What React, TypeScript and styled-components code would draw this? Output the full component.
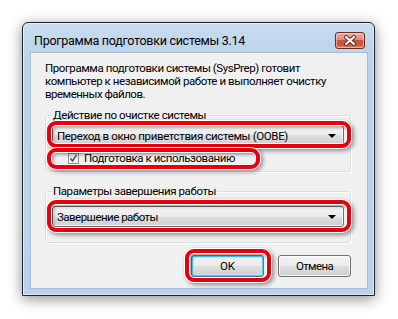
import React, { useLayoutEffect, useRef, useState } from 'react';
import styled, { createGlobalStyle } from 'styled-components';

const Global = createGlobalStyle`
  html, body { margin: 0; padding: 0; background: #ffffff; }
  body { font-family: Roboto, "Noto Sans", sans-serif; color: #000; }
  * { box-sizing: border-box; }
`;

const FitSpan = styled.span`
  display: inline-block;
  white-space: nowrap;
`;

/* Fits a label to the width it has in the screenshot (Segoe UI metrics) */
function Fit({ w, children }: { w: number; children: string }) {
  const ref = useRef<HTMLSpanElement>(null);
  const [ls, setLs] = useState(0);
  useLayoutEffect(() => {
    const el = ref.current;
    if (!el) return;
    el.style.letterSpacing = '0px';
    const natural = el.getBoundingClientRect().width;
    const n = (el.textContent || '').length;
    setLs((w - natural) / n);
  }, [w, children]);
  return (
    <FitSpan ref={ref} style={{ letterSpacing: `${ls}px` }}>
      {children}
    </FitSpan>
  );
}

const Page = styled.div`
  width: 398px;
  height: 319px;
  padding: 22px 0 0 22px;
`;

const Window = styled.div`
  width: 353px;
  height: 274px;
  border: 1px solid #1b2430;
  border-radius: 6px 6px 0 0;
  background: linear-gradient(180deg, #cadcf0 0px, #bcd3eb 30px, #b9d1ea 100%);
  box-shadow: 0 3px 14px rgba(0, 0, 0, 0.45), inset 0 0 0 1px rgba(255, 255, 255, 0.55);
  display: flex;
  flex-direction: column;
`;

const TitleBar = styled.div`
  height: 29px;
  flex: none;
  display: flex;
  align-items: flex-start;
  justify-content: space-between;
  padding: 0 9px 0 11px;
`;

const Title = styled.div`
  font-size: 12.5px;
  line-height: 14px;
  margin-top: 11px;
  color: #000;
`;

const CloseButton = styled.div`
  margin-top: 9px;
  width: 30px;
  height: 17px;
  border: 1px solid #6a2b22;
  border-radius: 3px;
  background: linear-gradient(180deg, #eab2a4 0%, #dc8a76 45%, #c8553c 50%, #c9583f 80%, #d98a6e 100%);
  box-shadow: inset 0 0 0 1px rgba(255, 220, 210, 0.55);
  display: flex;
  align-items: center;
  justify-content: center;
`;

const Client = styled.div`
  flex: 1;
  margin: 0 6px 6px 7px;
  background: #f0f0f0;
  border: 1px solid #a8bdd4;
  padding: 9px 16px 11px 14px;
  display: flex;
  flex-direction: column;
`;

const Description = styled.div`
  font-size: 11.5px;
  line-height: 13px;
  display: flex;
  flex-direction: column;
  align-items: flex-start;
`;

const GroupBox = styled.div<{ $mt: number; $pb: number }>`
  margin-top: ${(p) => p.$mt}px;
  padding: 0 6px ${(p) => p.$pb}px 6px;
  border: 1px solid #d5dfe5;
  border-radius: 3px;
  box-shadow: inset 1px 1px 0 #ffffff, 1px 1px 0 #ffffff;
  display: flex;
  flex-direction: column;
`;

const GroupLabel = styled.div`
  align-self: flex-start;
  margin-top: -8px;
  padding: 0 1px;
  height: 14px;
  line-height: 14px;
  font-size: 11.5px;
  background: #f0f0f0;
`;

const Highlight = styled.div<{ $mt: number; $inline?: boolean }>`
  position: relative;
  margin-top: ${(p) => p.$mt}px;
  display: flex;
  align-self: ${(p) => (p.$inline ? 'flex-start' : 'stretch')};
`;

const Ring = styled.div<{ $t: number; $r: number; $b: number; $l: number }>`
  position: absolute;
  top: ${(p) => -p.$t}px;
  right: ${(p) => -p.$r}px;
  bottom: ${(p) => -p.$b}px;
  left: ${(p) => -p.$l}px;
  border: 4px solid #e8000e;
  border-radius: 9px;
  box-shadow: 0 0 0 1px #ffffff, 2px 2px 4px 1px rgba(0, 0, 0, 0.4),
    inset 0 0 0 1px #ffffff, inset 2px 2px 3px 1px rgba(0, 0, 0, 0.3);
  pointer-events: none;
  z-index: 2;
`;

const Select = styled.div`
  flex: 1;
  height: 21px;
  border: 1px solid #707070;
  border-radius: 3px;
  background: linear-gradient(180deg, #f3f3f3 0%, #ebebeb 50%, #dedede 50%, #d0d0d0 100%);
  box-shadow: inset 0 0 0 1px rgba(255, 255, 255, 0.7);
  display: flex;
  align-items: center;
  justify-content: space-between;
  padding: 0 7px 0 4px;
  font-size: 11.5px;
`;

const Arrow = styled.span`
  width: 0;
  height: 0;
  border-left: 4px solid transparent;
  border-right: 4px solid transparent;
  border-top: 4px solid #000;
`;

const CheckRow = styled.div`
  display: flex;
  align-items: center;
  gap: 5px;
  height: 16px;
  padding: 0 8px 0 16px;
  font-size: 11.5px;
`;

const CheckBox = styled.div`
  width: 11px;
  height: 11px;
  border: 1px solid #8e8f8f;
  background: linear-gradient(135deg, #d6d6d6 0%, #f4f4f4 60%, #ffffff 100%);
  box-shadow: inset 0 0 0 1px #f4f4f4;
  display: flex;
  align-items: center;
  justify-content: center;
`;

const ButtonRow = styled.div`
  display: flex;
  justify-content: flex-end;
  gap: 14px;
  margin-top: 12px;
`;

const Button = styled.div<{ $default?: boolean }>`
  width: 73px;
  height: 22px;
  border: 1px solid ${(p) => (p.$default ? '#3c7fb1' : '#707070')};
  border-radius: 3px;
  background: linear-gradient(180deg, #f3f3f3 0%, #ebebeb 50%, #dedede 50%, #cfcfcf 100%);
  box-shadow: ${(p) =>
    p.$default
      ? 'inset 0 0 0 1px #4fd0f9, inset 0 0 0 2px rgba(190, 235, 250, 0.6)'
      : 'inset 0 0 0 1px rgba(255, 255, 255, 0.75)'};
  display: flex;
  align-items: center;
  justify-content: center;
  font-size: 11.5px;
`;

export default function App() {
  return (
    <>
      <Global />
      <Page>
        <Window>
          <TitleBar>
            <Title>
              <Fit w={211}>Программа подготовки системы 3.14</Fit>
            </Title>
            <CloseButton>
              <svg width="14" height="11" viewBox="0 0 14 11">
                <path d="M3 2 L11 9 M11 2 L3 9" stroke="#5a2a22" strokeWidth="4" strokeLinecap="round" />
                <path d="M3 2 L11 9 M11 2 L3 9" stroke="#ffffff" strokeWidth="2.2" strokeLinecap="round" />
              </svg>
            </CloseButton>
          </TitleBar>
          <Client>
            <Description>
              <Fit w={255}>Программа подготовки системы (SysPrep) готовит</Fit>
              <Fit w={281}>компьютер к независимой работе и выполняет очистку</Fit>
              <Fit w={100}>временных файлов.</Fit>
            </Description>
            <GroupBox $mt={14} $pb={5}>
              <GroupLabel>
                <Fit w={153}>Действие по очистке системы</Fit>
              </GroupLabel>
              <Highlight $mt={3}>
                <Select>
                  <Fit w={231}>Переход в окно приветствия системы (OOBE)</Fit>
                  <Arrow />
                </Select>
                <Ring $t={4} $r={7} $b={2} $l={5} />
              </Highlight>
              <Highlight $mt={4} $inline>
                <CheckRow>
                  <CheckBox>
                    <svg width="9" height="9" viewBox="0 0 9 9">
                      <path d="M1.5 4.5 L3.5 7 L7.5 1" stroke="#3d5696" strokeWidth="1.6" fill="none" />
                    </svg>
                  </CheckBox>
                  <Fit w={151}>Подготовка к использованию</Fit>
                </CheckRow>
                <Ring $t={2} $r={17} $b={3} $l={5} />
              </Highlight>
            </GroupBox>
            <GroupBox $mt={19} $pb={15}>
              <GroupLabel>
                <Fit w={163}>Параметры завершения работы</Fit>
              </GroupLabel>
              <Highlight $mt={8}>
                <Select>
                  <Fit w={101}>Завершение работы</Fit>
                  <Arrow />
                </Select>
                <Ring $t={6} $r={7} $b={5} $l={5} />
              </Highlight>
            </GroupBox>
            <ButtonRow>
              <Highlight $mt={0}>
                <Button $default>OK</Button>
                <Ring $t={6} $r={7} $b={5} $l={6} />
              </Highlight>
              <Button>
                <Fit w={37}>Отмена</Fit>
              </Button>
            </ButtonRow>
          </Client>
        </Window>
      </Page>
    </>
  );
}
